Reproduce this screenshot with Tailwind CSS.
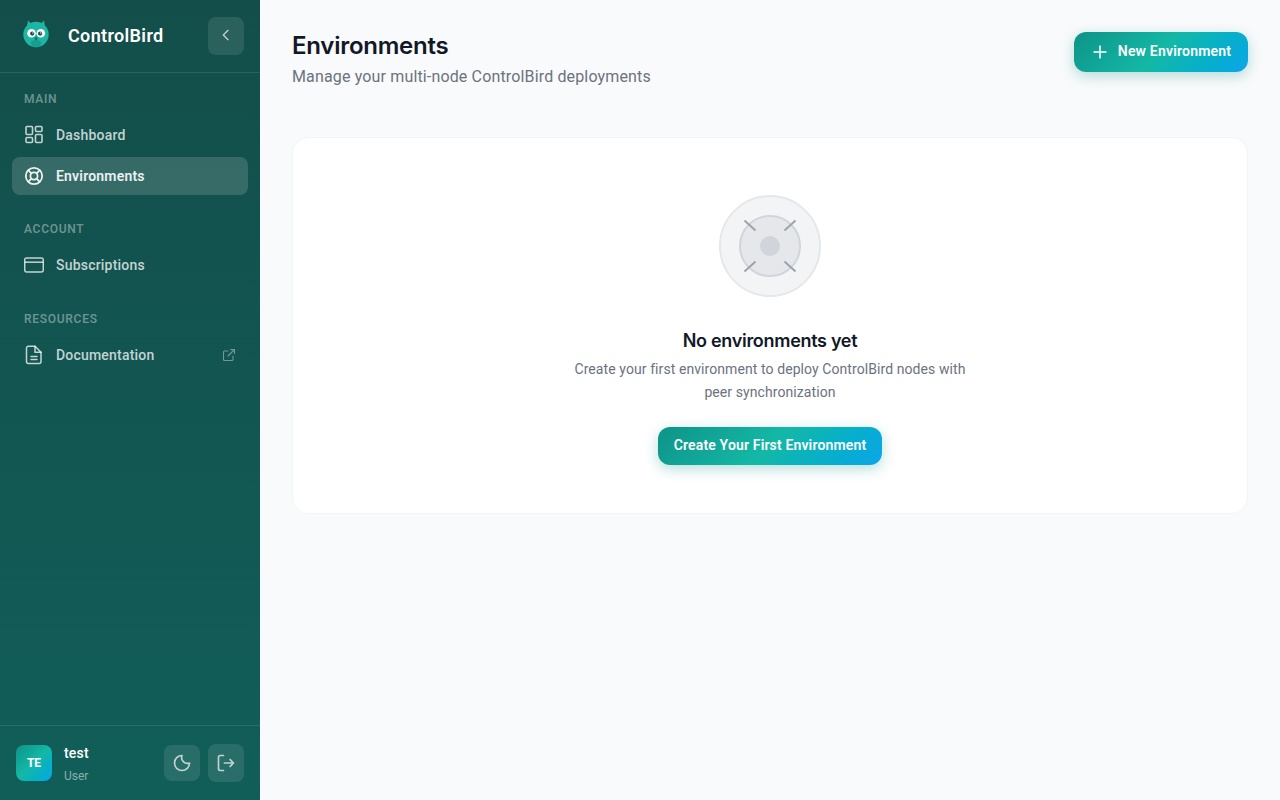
<!DOCTYPE html>
<html lang="en">
<head>
<meta charset="utf-8">
<title>Environments</title>
<script src="https://cdn.jsdelivr.net/npm/@tailwindcss/browser@4"></script>
</head>
<body class="font-['Roboto','Noto_Sans',sans-serif] bg-[#f9fafb]">
<div class="flex h-[800px] w-[1280px] overflow-hidden">
    <!-- sidebar -->
    <aside class="flex w-[260px] shrink-0 flex-col bg-linear-to-b from-[#134e4a] to-[#115e59] text-white">
        <div class="flex h-[73px] items-center justify-between border-b border-white/10 pl-5 pr-4">
            <div class="flex items-center gap-[16px]">
                <svg class="h-8 w-8" viewBox="0 0 32 32">
                    <path d="M8 0.500l4 4h8l4-4 1.500 9H6.500z" fill="#1db5a3"/>
                    <ellipse cx="16" cy="14.500" rx="12.700" ry="12.800" fill="#1db5a3"/>
                    <path d="M16 27.300c-3.500 0-5.500-2-5-5.500 1-2 9-2 10 0 .5 3.500-1.500 5.500-5 5.500z" fill="#149f8f"/>
                    <circle cx="11.500" cy="13.300" r="4.300" fill="#fff"/>
                    <circle cx="20.800" cy="13.300" r="4.300" fill="#fff"/>
                    <circle cx="12.200" cy="13.600" r="2.100" fill="#134e4a"/>
                    <circle cx="20.100" cy="13.600" r="2.100" fill="#134e4a"/>
                    <circle cx="12.900" cy="12.900" r="0.700" fill="#fff"/>
                    <circle cx="20.800" cy="12.900" r="0.700" fill="#fff"/>
                    <path d="M16 16.500l1.700 2-1.700 2.500-1.700-2.500z" fill="#0f766e"/>
                </svg>
                <span class="-translate-y-px text-[18px] font-semibold tracking-[0.35px]">ControlBird</span>
            </div>
            <button class="flex h-[38px] w-9 items-center justify-center rounded-lg bg-white/10 text-white/70">
                <svg class="h-4 w-4 -translate-y-px" viewBox="0 0 24 24" fill="none" stroke="currentColor" stroke-width="2" stroke-linecap="round" stroke-linejoin="round"><path d="M15 5l-7 7 7 7"/></svg>
            </button>
        </div>

        <nav class="flex-1 px-3 pt-[18px]">
            <p class="mb-[9px] px-3 text-xs font-medium tracking-[0.06em] text-white/40">MAIN</p>
            <a class="flex h-[38px] items-center gap-[12px] rounded-lg px-3 text-sm font-medium tracking-[0.2px] text-white/75">
                <svg class="h-5 w-5" viewBox="0 0 20 20" fill="none" stroke="currentColor" stroke-width="1.600"><rect x="2" y="1.500" width="6.500" height="8" rx="1"/><rect x="11.500" y="1.500" width="6.500" height="5" rx="1"/><rect x="2" y="12.500" width="6.500" height="5" rx="1"/><rect x="11.500" y="9.500" width="6.500" height="8" rx="1"/></svg>
                Dashboard
            </a>
            <a class="mt-[3px] flex h-[38px] items-center gap-[12px] rounded-lg bg-white/15 px-3 text-sm font-semibold tracking-[0.2px] text-white/90">
                <svg class="h-5 w-5" viewBox="0 0 20 20" fill="none" stroke="currentColor" stroke-width="1.800"><circle cx="10" cy="10" r="8.200"/><circle cx="10" cy="10" r="3.600"/><path d="M4.200 4.200l3.200 3.200M15.800 4.200l-3.200 3.200M4.200 15.800l3.200-3.200M15.800 15.800l-3.200-3.200"/></svg>
                Environments
            </a>

            <p class="mb-[9px] mt-[26px] px-3 text-xs font-medium tracking-[0.06em] text-white/40">ACCOUNT</p>
            <a class="flex h-[38px] items-center gap-[12px] rounded-lg px-3 text-sm font-medium tracking-[0.2px] text-white/75">
                <svg class="h-5 w-5" viewBox="0 0 20 20" fill="none" stroke="currentColor" stroke-width="1.500"><rect x="0.700" y="3" width="18.600" height="14" rx="2"/><path d="M0.700 7.200h18.600"/></svg>
                Subscriptions
            </a>

            <p class="mb-[9px] mt-[27px] px-3 text-xs font-medium tracking-[0.06em] text-white/40">RESOURCES</p>
            <a class="flex h-[38px] items-center gap-[12px] rounded-lg px-3 text-sm font-medium tracking-[0.2px] text-white/75">
                <svg class="h-5 w-5" viewBox="0 0 20 20" fill="none" stroke="currentColor" stroke-width="1.500" stroke-linejoin="round" stroke-linecap="round"><path d="M4.500 1.200h6.500l6 6v9.300a2 2 0 0 1-2 2H4.500a2 2 0 0 1-2-2V3.200a2 2 0 0 1 2-2z"/><path d="M11 1.200V7.200h6M7 11.500h6M7 14.500h6"/></svg>
                <span class="flex-1">Documentation</span>
                <svg class="h-[14px] w-[14px] text-white/40" viewBox="0 0 14 14" fill="none" stroke="currentColor" stroke-width="1.100" stroke-linecap="round" stroke-linejoin="round"><path d="M6 3H2.500A1 1 0 0 0 1.500 4v7.500a1 1 0 0 0 1 1H10a1 1 0 0 0 1-1V8M6 8l6.500-6.500M8.500 1.500h4v4"/></svg>
            </a>
        </nav>

        <div class="flex h-[75px] items-center border-t border-white/10 pl-4 pr-4">
            <div class="flex h-9 w-9 items-center justify-center rounded-lg bg-linear-135 from-[#0d9488] via-[#14b8a6] to-[#0ea5e9] text-xs font-bold">TE</div>
            <div class="ml-3 flex-1">
                <p class="-translate-y-px text-sm font-medium leading-5 tracking-[0.2px]">test</p>
                <p class="mt-[3px] translate-y-px text-xs leading-4 text-white/50">User</p>
            </div>
            <button class="flex h-9 w-9 items-center justify-center rounded-lg bg-white/10 text-white/70">
                <svg class="h-5 w-5" viewBox="0 0 24 24" fill="none" stroke="currentColor" stroke-width="2" stroke-linecap="round" stroke-linejoin="round"><path d="M12 3a9 9 0 1 0 9 9 7 7 0 0 1-9-9z"/></svg>
            </button>
            <button class="ml-2 flex h-[38px] w-9 items-center justify-center rounded-lg bg-white/10 text-white/70">
                <svg class="h-5 w-5" viewBox="0 0 24 24" fill="none" stroke="currentColor" stroke-width="2" stroke-linecap="round" stroke-linejoin="round"><path d="M9 21H5a2 2 0 0 1-2-2V5a2 2 0 0 1 2-2h4M10 12h11M17 8l4 4-4 4"/></svg>
            </button>
        </div>
    </aside>

    <!-- main -->
    <main class="flex-1 px-8 pt-8">
        <div class="flex items-start justify-between">
            <div>
                <h1 class="text-2xl font-semibold leading-7 tracking-[-0.25px] text-[#111827] font-['Inter',sans-serif]">Environments</h1>
                <p class="mt-[5px] text-base leading-6 tracking-[0.15px] text-[#6b7280]">Manage your multi-node ControlBird deployments</p>
            </div>
            <button class="flex h-10 w-[174px] items-center justify-center gap-2 rounded-xl bg-linear-135 from-[#0d9488] via-[#14b8a6] to-[#0ea5e9] pr-px text-sm font-semibold tracking-[0.2px] text-white shadow-[0_4px_14px_rgba(13,148,136,0.3)]">
                <svg class="h-5 w-5" viewBox="0 0 20 20" fill="none" stroke="currentColor" stroke-width="1.500" stroke-linecap="round"><path d="M10 4v12M4 10h12"/></svg>
                <span class="-translate-y-px">New Environment</span>
            </button>
        </div>

        <section class="mt-[48px] flex h-[377px] flex-col items-center rounded-2xl border border-[#f3f4f6] bg-white pt-[57px]">
            <svg class="h-[102px] w-[102px]" viewBox="0 0 102 102" fill="none">
                <circle cx="51" cy="51" r="50" fill="#f3f4f6" stroke="#e5e7eb" stroke-width="2"/>
                <circle cx="51" cy="51" r="30" fill="#e5e7eb" stroke="#d1d5db" stroke-width="2"/>
                <circle cx="51" cy="51" r="10" fill="#d1d5db"/>
                <path d="M25.500 25.500l11 10M76.500 25.500l-11 10M25.500 76.500l11-10M76.500 76.500l-11-10" stroke="#9ca3af" stroke-width="2"/>
            </svg>
            <h2 class="mt-[32px] text-lg font-semibold leading-6 tracking-[-0.3px] text-[#111827] font-['Inter',sans-serif]">No environments yet</h2>
            <p class="mt-[5px] max-w-[400px] text-center text-sm leading-[23px] tracking-[0.08px] text-[#6b7280]">Create your first environment to deploy ControlBird nodes with peer synchronization</p>
            <button class="mt-[23px] flex h-[38px] w-[224px] items-center justify-center rounded-xl bg-linear-135 from-[#0d9488] via-[#14b8a6] to-[#0ea5e9] text-sm font-semibold tracking-[0.15px] text-white shadow-[0_4px_14px_rgba(13,148,136,0.3)]"><span class="-translate-y-px">Create Your First Environment</span></button>
        </section>
    </main>
</div>
</body>
</html>
